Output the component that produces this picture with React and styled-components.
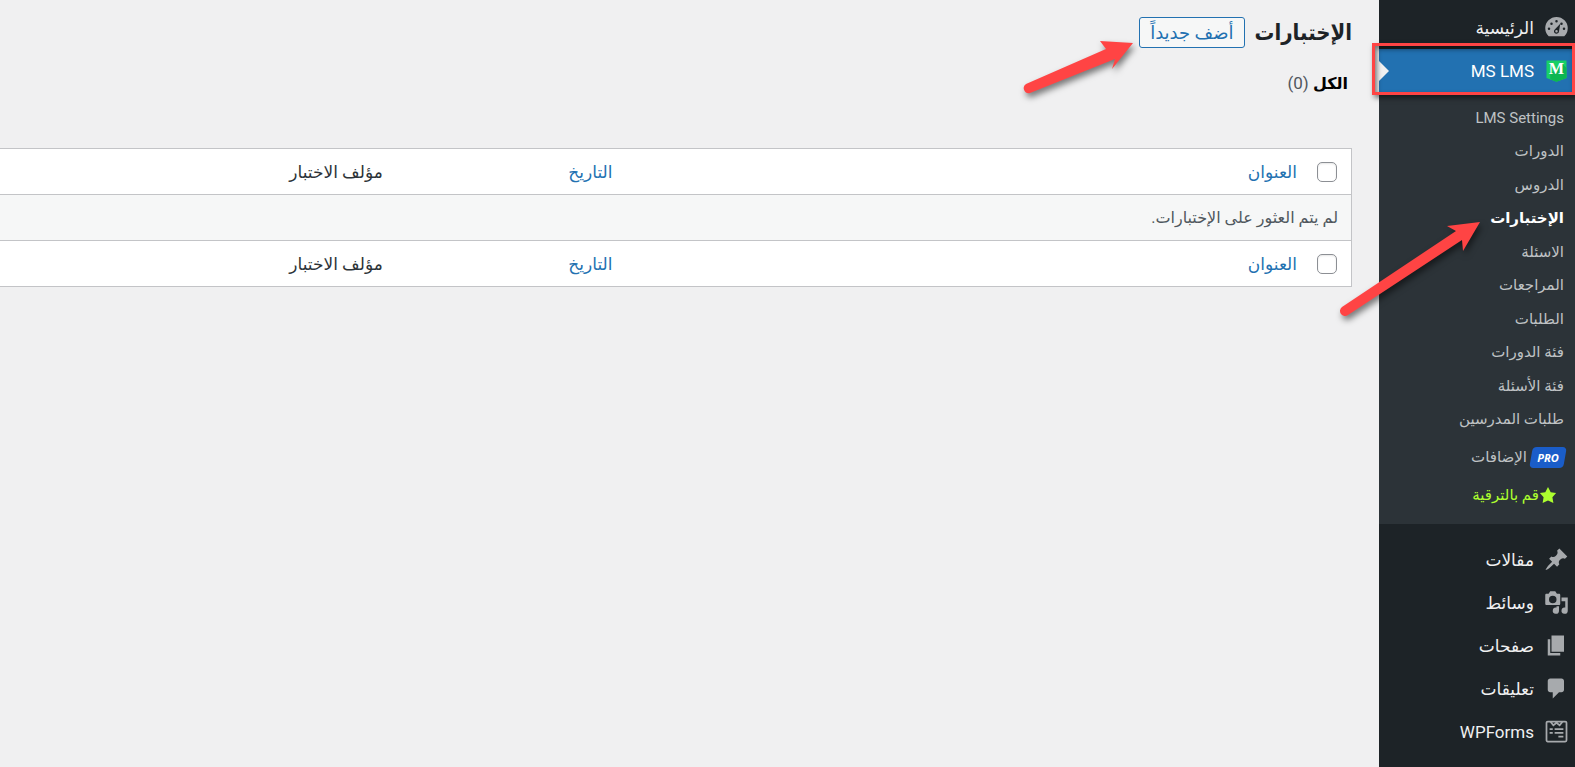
import styled, { createGlobalStyle } from "styled-components"

const courseItems = ["LMS Settings", "الدورات", "الدروس", "الإختبارات", "الاسئلة", "المراجعات", "الطلبات", "فئة الدورات", "فئة الأسئلة", "طلبات المدرسين"];

const siteItems = [
  { label: "مقالات", Icon: PinIcon },
  { label: "وسائط", Icon: MediaIcon },
  { label: "صفحات", Icon: PagesIcon },
  { label: "تعليقات", Icon: CommentIcon },
  { label: "WPForms", Icon: FormsIcon },
];

export default function App() {
  return (
    <Page dir="rtl" lang="ar">
      <GlobalStyle />
      <Sidebar>
        <MenuLink href="#home"><GaugeIcon />الرئيسية</MenuLink>
        <CurrentMenu>
          <CurrentLink href="#lms"><LmsIcon />MS LMS</CurrentLink>
          <Highlight />
        </CurrentMenu>
        <Submenu>
          {courseItems.map((label) => (
            <SubItem key={label}>
              <SubLink href="#sub" $current={label === "الإختبارات"}>{label}</SubLink>
              {label === "الإختبارات" && <MenuArrow />}
            </SubItem>
          ))}
          <AddonItem>
            <ProBadge>PRO</ProBadge>
            <SubLink href="#addons">الإضافات</SubLink>
          </AddonItem>
          <UpgradeItem>
            <StarIcon />
            <UpgradeLink href="#upgrade">قم بالترقية</UpgradeLink>
          </UpgradeItem>
        </Submenu>
        <SiteMenu>
          {siteItems.map(({ label, Icon }) => (
            <MenuLink key={label} href="#site"><Icon />{label}</MenuLink>
          ))}
        </SiteMenu>
      </Sidebar>
      <Main>
        <Header>
          <Title>الإختبارات</Title>
          <AddBox>
            <AddButton type="button">أضف جديداً</AddButton>
            <ButtonArrow />
          </AddBox>
        </Header>
        <Filter><FilterLink href="#all">الكل</FilterLink> (0)</Filter>
        <Table>
          <thead><Labels id="select-top" /></thead>
          <tbody>
            <tr><Empty colSpan="4">لم يتم العثور على الإختبارات.</Empty></tr>
          </tbody>
          <tfoot><Labels id="select-bottom" /></tfoot>
        </Table>
      </Main>
    </Page>
  )
}

function Labels({ id }) {
  return (
    <tr>
      <HeadCell $width="45px"><Checkbox type="checkbox" id={id} aria-label="العنوان" /></HeadCell>
      <HeadCell><SortLink href="#title">العنوان</SortLink></HeadCell>
      <HeadCell $width="17%"><SortLink href="#date">التاريخ</SortLink></HeadCell>
      <HeadCell $width="29%">مؤلف الاختبار</HeadCell>
    </tr>
  )
}

function GaugeIcon() {
  return (
    <Icon viewBox="0 0 20 20">
      <path d="M3.76 17h12.48A9 9 0 1 0 3.76 17zM10 4a1 1 0 1 1 0 2 1 1 0 0 1 0-2zM6 6a1 1 0 1 1 0 2 1 1 0 0 1 0-2zm8 0a1 1 0 1 1 0 2 1 1 0 0 1 0-2zm-5.370 5.550L13 7l-1 6a2 2 0 1 1-3.370-1.450zM4 10a1 1 0 1 1 0 2 1 1 0 0 1 0-2zm12 0a1 1 0 1 1 0 2 1 1 0 0 1 0-2zm-5 3a1 1 0 1 0-2 0 1 1 0 0 0 2 0z" fillRule="evenodd" />
    </Icon>
  )
}

function LmsIcon() {
  return (
    <Icon viewBox="0 0 20 20">
      <path d="M2 2h16v14l-8 3-8-3z" fill="#17d066" />
      <path d="M5 13l10-8 3 3v8l-8 3-5-2z" fill="#0cb651" />
      <LogoLetter x="10" y="13" textAnchor="middle">M</LogoLetter>
    </Icon>
  )
}

function PinIcon() {
  return (
    <Icon viewBox="0 0 20 20">
      <path d="M10.440 3.020l1.820-1.820 6.360 6.350-1.830 1.820c-1.050-.68-2.480-.57-3.410.36l-.75.75c-.92.93-1.040 2.350-.35 3.410l-1.830 1.820-2.410-2.410-2.800 2.790c-.42.42-3.380 2.710-3.800 2.290s1.860-3.390 2.280-3.810l2.790-2.790L4.100 9.360l1.830-1.820c1.050.69 2.480.57 3.400-.36l.75-.75c.93-.92 1.050-2.350.36-3.410z" />
    </Icon>
  )
}

function MediaIcon() {
  return (
    <Icon viewBox="0 0 20 20">
      <path d="M13 11V4c0-.55-.45-1-1-1h-1.670L9 1H5L3.670 3H2c-.55 0-1 .45-1 1v7c0 .55.45 1 1 1h10c.55 0 1-.45 1-1zM7 4.500a3 3 0 1 1 0 6 3 3 0 0 1 0-6zM14 6h5v10.500a2.500 2.500 0 1 1-2-2.450V9h-3V6zm-4 8.050V13h2v3.500a2.500 2.500 0 1 1-2-2.450z" fillRule="evenodd" />
    </Icon>
  )
}

function PagesIcon() {
  return (
    <Icon viewBox="0 0 20 20">
      <path d="M6 15V2h10v13H6zm-1 1h8v2H3V5h2v11z" />
    </Icon>
  )
}

function CommentIcon() {
  return (
    <Icon viewBox="0 0 20 20">
      <path d="M5 2h9c1.100 0 2 .9 2 2v7c0 1.100-.9 2-2 2h-2l-5 5v-5H5c-1.100 0-2-.9-2-2V4c0-1.100.9-2 2-2z" />
    </Icon>
  )
}

function FormsIcon() {
  return (
    <Icon viewBox="0 0 20 20">
      <path d="M3 2h14a1 1 0 0 1 1 1v14a1 1 0 0 1-1 1H3a1 1 0 0 1-1-1V3a1 1 0 0 1 1-1zM5 2l2.500 3L10 3l2.500 2L15 2M4.500 8H7M4.500 11H7M8.500 8h7M8.500 11h7M11.500 14h4" fill="none" stroke="currentColor" strokeWidth="1.400" />
    </Icon>
  )
}

function StarIcon() {
  return (
    <Star viewBox="0 0 20 20">
      <path d="M10 1l3 6 6 .75-4.120 4.620L16 19l-6-3-6 3 1.130-6.630L1 7.750 7 7z" />
    </Star>
  )
}

function MenuArrow() {
  return (
    <MenuPointer viewBox="0 0 142 98" aria-hidden="true">
      <path d="M140 2L107 6L116 11L2 87A5 5 0 0 0 8 95L122 20L123 31Z" />
    </MenuPointer>
  )
}

function ButtonArrow() {
  return (
    <ButtonPointer viewBox="0 0 112 56" aria-hidden="true">
      <path d="M111 3L78 1L84 9L4 44A5 5 0 0 0 8 53L93 19L90 29Z" />
    </ButtonPointer>
  )
}

const GlobalStyle = createGlobalStyle`
  * {
    box-sizing: border-box;
  }

  body {
    margin: 0;
    background: #f0f0f1;
    color: #2c3338;
    font-family: Roboto, "Noto Sans", "DejaVu Sans", sans-serif;
    font-size: 16px;
  }

  a {
    text-decoration: none;
  }
`

const Page = styled.div`
  display: flex;
  min-height: 100vh;
  overflow: hidden;
`

const Sidebar = styled.nav`
  position: relative;
  z-index: 1;
  flex: none;
  width: 196px;
  padding-top: 6px;
  background: #1d2327;
`

const MenuLink = styled.a`
  display: flex;
  align-items: center;
  gap: 10px;
  height: 43px;
  padding-right: 6px;
  color: #f0f0f1;
  font-size: 17px;
`

const CurrentMenu = styled.div`
  position: relative;
`

const CurrentLink = styled(MenuLink)`
  background: #2271b1;
  color: #fff;

  &::after {
    content: "";
    position: absolute;
    left: 0;
    border: 10px solid transparent;
    border-left-color: #f0f0f1;
    border-right-width: 0;
  }
`

const Highlight = styled.div`
  position: absolute;
  inset: -6px 0 -3px -7px;
  border: 3px solid #ff4444;
  box-shadow: 2px 3px 5px rgba(0, 0, 0, 0.5), inset 2px 3px 5px rgba(0, 0, 0, 0.5);
  pointer-events: none;
`

const Submenu = styled.ul`
  margin: 0;
  padding: 9px 0 13px;
  list-style: none;
  background: #2c3338;
`

const SubItem = styled.li`
  position: relative;
  display: flex;
  align-items: center;
  height: 33px;
  padding-right: 11px;

  &:nth-child(even) {
    height: 34px;
  }
`

const SubLink = styled.a`
  color: ${(props) => (props.$current ? "#fff" : "#bfc2c4")};
  font-size: 15px;
  font-weight: ${(props) => (props.$current ? 600 : 400)};
`

const AddonItem = styled.li`
  display: flex;
  align-items: center;
  gap: 4px;
  height: 42px;
  padding-right: 10px;
`

const ProBadge = styled.span`
  display: grid;
  place-items: center;
  position: relative;
  z-index: 0;
  width: 34px;
  height: 21px;
  color: #fff;
  font-family: "Noto Sans", sans-serif;
  font-size: 11px;
  font-style: italic;
  font-weight: 700;

  &::before {
    content: "";
    position: absolute;
    inset: 0;
    z-index: -1;
    border-radius: 4px;
    background: #1a5dc9;
    transform: skewX(-10deg);
  }
`

const UpgradeItem = styled.li`
  display: flex;
  align-items: center;
  height: 33px;
  padding-right: 18px;
`

const UpgradeLink = styled(SubLink)`
  color: #adff2f;
`

const SiteMenu = styled.div`
  padding-top: 14px;
`

const Icon = styled.svg`
  flex: none;
  width: 25px;
  height: 25px;
  color: #a7aaad;
  fill: currentColor;
`

const LogoLetter = styled.text`
  fill: #fff;
  font-family: "Liberation Serif", serif;
  font-size: 13px;
  font-weight: 700;
`

const Star = styled.svg`
  width: 18px;
  height: 18px;
  fill: #adff2f;
`

const Pointer = styled.svg`
  position: absolute;
  overflow: visible;
  fill: #ff4444;
  filter: drop-shadow(2px 4px 3px rgba(0, 0, 0, 0.5));
  pointer-events: none;
`

const MenuPointer = styled(Pointer)`
  top: 19px;
  right: 93px;
  width: 142px;
`

const ButtonPointer = styled(Pointer)`
  top: 23px;
  left: -117px;
  width: 112px;
`

const Main = styled.main`
  flex: 1;
  min-width: 0;
  padding: 17px 27px 0 0;
`

const Header = styled.header`
  display: flex;
  align-items: center;
  gap: 10px;
  height: 31px;
`

const Title = styled.h1`
  margin: 0;
  color: #1d2327;
  font-family: "DejaVu Sans Condensed", "DejaVu Sans", sans-serif;
  font-size: 22px;
  font-weight: 700;
`

const AddBox = styled.div`
  position: relative;
`

const AddButton = styled.button`
  display: block;
  height: 31px;
  padding: 0 10px;
  border: 1px solid #2271b1;
  border-radius: 3px;
  background: #f6f7f7;
  color: #2271b1;
  font-family: inherit;
  font-size: 18px;
  line-height: 24px;
`

const Filter = styled.p`
  margin: 0;
  padding: 23px 4px 0 0;
  line-height: 24px;
  font-size: 17px;
  color: #50575e;
`

const FilterLink = styled.a`
  color: #000;
  font-size: 16px;
  font-weight: 600;
`

const Table = styled.table`
  width: 100%;
  margin-top: 52px;
  border: 1px solid #c3c4c7;
  border-left: 0;
  border-spacing: 0;
  table-layout: fixed;
  background: #fff;
`

const HeadCell = styled.th`
  width: ${(props) => props.$width || "auto"};
  height: 45px;
  padding: 0 9px 0 0;
  text-align: right;
  font-size: 17px;
  font-weight: 400;
`

const Checkbox = styled.input`
  display: block;
  appearance: none;
  width: 20px;
  height: 20px;
  margin: 0 5px 0 0;
  border: 1px solid #8c8f94;
  border-radius: 5px;
  background: #fff;
  box-shadow: inset 0 1px 2px rgba(0, 0, 0, 0.1);
`

const SortLink = styled.a`
  color: #2271b1;
`

const Empty = styled.td`
  height: 47px;
  padding: 0 13px 0 0;
  border: 1px solid #c3c4c7;
  border-width: 1px 0;
  background: #f6f7f7;
  color: #50575e;
`
